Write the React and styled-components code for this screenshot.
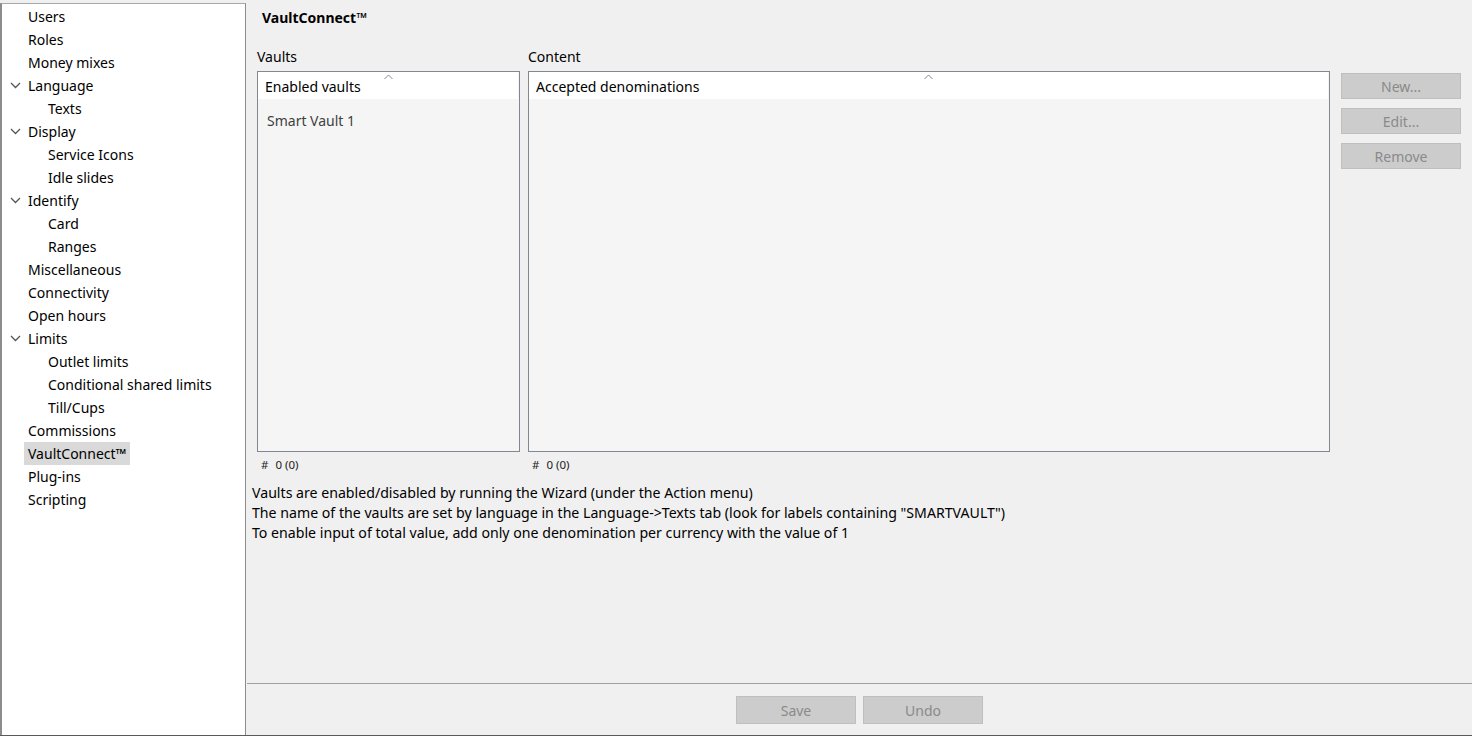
import React from "react";
import styled, { createGlobalStyle } from "styled-components";

const Global = createGlobalStyle`
  html, body { margin: 0; padding: 0; background: #f0f0f0; }
  body { font-family: "Noto Sans", "Open Sans", sans-serif; font-size: 14px; color: #000; }
  * { box-sizing: border-box; }
`;

const Root = styled.div`
  display: flex;
  width: 1472px;
  height: 736px;
  border-bottom: 1px solid #5a5a5a;
  overflow: hidden;
`;

const Sidebar = styled.div`
  width: 246px;
  flex: none;
  margin-top: 3px;
  background: #fff;
  border-left: 2px solid #8c8c8c;
  border-top: 1px solid #a8a8a8;
  border-right: 1px solid #8c8c8c;
  padding-top: 1px;
`;

const TreeRow = styled.div`
  display: flex;
  align-items: center;
  height: 23px;
  padding-left: ${(p) => (p.$level === 1 ? 42 : 22)}px;
  position: relative;
`;

const TreeLabel = styled.span`
  display: inline-block;
  padding: 0 4px;
  line-height: 23px;
  background: ${(p) => (p.$selected ? "#d9d9d9" : "transparent")};
  white-space: nowrap;
`;

const Toggle = styled.svg`
  position: absolute;
  left: 8px;
  top: 8px;
`;

const Main = styled.div`
  flex: 1;
  display: flex;
  flex-direction: column;
  min-width: 0;
`;

const Title = styled.div`
  font-weight: 700;
  padding: 8px 0 0 16px;
  line-height: 20px;
  height: 40px;
`;

const Body = styled.div`
  flex: 1;
  padding: 7px 11px 0 11px;
`;

const Columns = styled.div`
  display: flex;
  align-items: flex-start;
`;

const Column = styled.div`
  display: flex;
  flex-direction: column;
  width: ${(p) => (p.$width ? `${p.$width}px` : "auto")};
  flex: ${(p) => (p.$width ? "none" : "1")};
  margin-right: ${(p) => p.$gap || 0}px;
`;

const Label = styled.div`
  line-height: 20px;
  margin-bottom: 4px;
`;

const ListBox = styled.div`
  height: 381px;
  border: 1px solid #828790;
  background: #f5f5f5;
  display: flex;
  flex-direction: column;
`;

const ListHeader = styled.div`
  position: relative;
  height: 27px;
  background: #fff;
  line-height: 28px;
  padding: 1px 0 0 7px;
  margin-right: 1px;
`;

const SortCaret = styled.svg`
  position: absolute;
  top: 2px;
  left: ${(p) => p.$left}px;
`;

const ListItem = styled.div`
  line-height: 20px;
  padding: 12px 0 0 9px;
  color: #404040;
`;

const Count = styled.div`
  font-size: 11.5px;
  line-height: 20px;
  padding-left: 4px;
  margin-top: 3px;
  color: #222;
  & span { margin-right: 7px; }
`;

const SideButtons = styled.div`
  width: 120px;
  flex: none;
  display: flex;
  flex-direction: column;
  gap: 9px;
  margin-top: 26px;
`;

const GreyButton = styled.button`
  width: 120px;
  height: ${(p) => p.$h || 26}px;
  background: #cccccc;
  border: 1px solid #bfbfbf;
  color: #8a8a8a;
  font-family: inherit;
  font-size: 14px;
  padding: 0;
`;

const Info = styled.div`
  margin-top: 8px;
  margin-left: -5px;
  line-height: 20px;
  font-size: 14.15px;
`;

const Footer = styled.div`
  height: 52px;
  border-top: 1px solid #a0a0a0;
  margin-left: 1px;
  display: flex;
  justify-content: center;
  gap: 7px;
  padding-top: 12px;
  & > button { padding-top: 1px; }
`;

const Chevron = () => (
  <Toggle width="11" height="7" viewBox="0 0 11 7">
    <path d="M1 1 L5.5 5.5 L10 1" fill="none" stroke="#555" strokeWidth="1.3" />
  </Toggle>
);

const Caret = ({ left }) => (
  <SortCaret $left={left} width="9" height="6" viewBox="0 0 9 6">
    <path d="M0.5 5 L4.5 1 L8.5 5" fill="none" stroke="#888" strokeWidth="1" />
  </SortCaret>
);

const tree = [
  { t: "Users" },
  { t: "Roles" },
  { t: "Money mixes" },
  { t: "Language", open: true },
  { t: "Texts", l: 1 },
  { t: "Display", open: true },
  { t: "Service Icons", l: 1 },
  { t: "Idle slides", l: 1 },
  { t: "Identify", open: true },
  { t: "Card", l: 1 },
  { t: "Ranges", l: 1 },
  { t: "Miscellaneous" },
  { t: "Connectivity" },
  { t: "Open hours" },
  { t: "Limits", open: true },
  { t: "Outlet limits", l: 1 },
  { t: "Conditional shared limits", l: 1 },
  { t: "Till/Cups", l: 1 },
  { t: "Commissions" },
  { t: "VaultConnect™", sel: true },
  { t: "Plug-ins" },
  { t: "Scripting" },
];

export default function App() {
  return (
    <>
      <Global />
      <Root>
        <Sidebar>
          {tree.map((n) => (
            <TreeRow key={n.t} $level={n.l || 0}>
              {n.open && <Chevron />}
              <TreeLabel $selected={n.sel}>{n.t}</TreeLabel>
            </TreeRow>
          ))}
        </Sidebar>
        <Main>
          <Title>VaultConnect™</Title>
          <Body>
            <Columns>
              <Column $width={263} $gap={8}>
                <Label>Vaults</Label>
                <ListBox>
                  <ListHeader>
                    Enabled vaults
                    <Caret left={126} />
                  </ListHeader>
                  <ListItem>Smart Vault 1</ListItem>
                </ListBox>
                <Count>
                  <span>#</span>0 (0)
                </Count>
              </Column>
              <Column $gap={11}>
                <Label>Content</Label>
                <ListBox>
                  <ListHeader>
                    Accepted denominations
                    <Caret left={395} />
                  </ListHeader>
                </ListBox>
                <Count>
                  <span>#</span>0 (0)
                </Count>
              </Column>
              <SideButtons>
                <GreyButton>New...</GreyButton>
                <GreyButton>Edit...</GreyButton>
                <GreyButton>Remove</GreyButton>
              </SideButtons>
            </Columns>
            <Info>
              <div>Vaults are enabled/disabled by running the Wizard (under the Action menu)</div>
              <div>
                The name of the vaults are set by language in the Language-&gt;Texts tab (look for labels
                containing "SMARTVAULT")
              </div>
              <div>To enable input of total value, add only one denomination per currency with the value of 1</div>
            </Info>
          </Body>
          <Footer>
            <GreyButton $h={28}>Save</GreyButton>
            <GreyButton $h={28}>Undo</GreyButton>
          </Footer>
        </Main>
      </Root>
    </>
  );
}
